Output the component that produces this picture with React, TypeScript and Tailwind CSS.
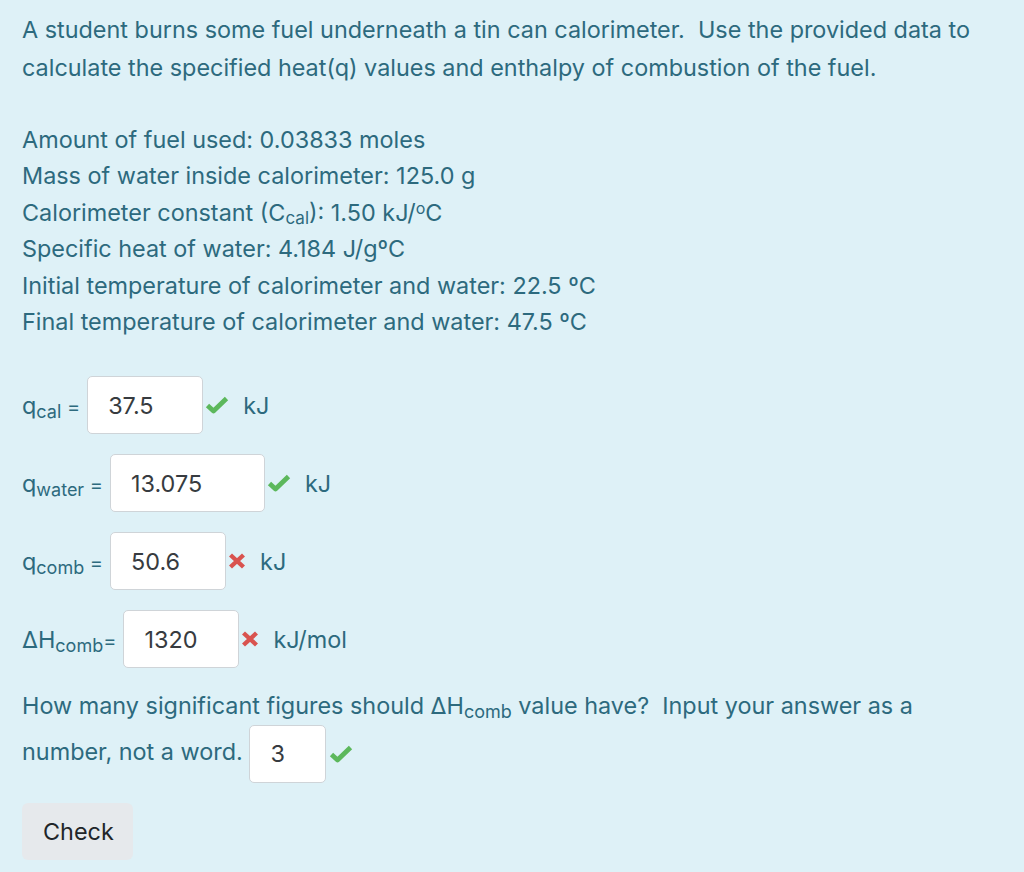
const font = { fontFamily: 'Inter, "Noto Sans", sans-serif' }

function Mark({ ok }: { ok: boolean }) {
  return ok ? (
    <svg viewBox="0 0 24 18" className="w-[24px] h-[18px] shrink-0">
      <path d="M2.5 9.5 L8.5 15 L21.5 2.5" fill="none" stroke="#5cb85c" strokeWidth="4.8" strokeLinejoin="round" />
    </svg>
  ) : (
    <svg viewBox="0 0 18 16" className="w-[18px] h-[16px] shrink-0">
      <path d="M2.5 2 L15.5 14 M15.5 2 L2.5 14" fill="none" stroke="#d9534f" strokeWidth="4.4" />
    </svg>
  )
}

function Answer({ value, width }: { value: string; width: string }) {
  return (
    <span
      className={`inline-flex items-center h-[58px] ${width} pl-[20px] bg-white border border-[#cfd4d8] rounded-[5px] text-[#373b40] align-middle`}
    >
      {value}
    </span>
  )
}

interface Row {
  sym: string
  sub: string
  eq: string
  value: string
  width: string
  ok: boolean
  unit: string
}

const rows: Row[] = [
  { sym: 'q', sub: 'cal', eq: ' =', value: '37.5', width: 'w-[116px]', ok: true, unit: 'kJ' },
  { sym: 'q', sub: 'water', eq: ' =', value: '13.075', width: 'w-[155px]', ok: true, unit: 'kJ' },
  { sym: 'q', sub: 'comb', eq: ' =', value: '50.6', width: 'w-[116px]', ok: false, unit: 'kJ' },
  { sym: 'ΔH', sub: 'comb', eq: '=', value: '1320', width: 'w-[116px]', ok: false, unit: 'kJ/mol' },
]

const data = [
  'Amount of fuel used: 0.03833 moles',
  'Mass of water inside calorimeter: 125.0 g',
  null,
  'Specific heat of water: 4.184 J/g\u00baC',
  'Initial temperature of calorimeter and water: 22.5 \u00baC',
  'Final temperature of calorimeter and water: 47.5 \u00baC',
]

export default function App() {
  return (
    <div
      className="min-h-[872px] bg-[#def1f7] text-[#2d6a7e] text-[23.4px] px-[22px] pt-[11px] pb-[14px]"
      style={font}
    >
      {/* Prompt */}
      <p className="leading-[38px]">
        A student burns some fuel underneath a tin can calorimeter.&nbsp; Use the provided data to
        calculate the specified heat(q) values and enthalpy of combustion of the fuel.
      </p>

      {/* Given data */}
      <div className="mt-[35px] leading-[36.4px]">
        {data.map((line, i) =>
          line === null ? (
            <div key={i}>
              Calorimeter constant (C<sub className="text-[17px] -bottom-[3px]">cal</sub>): 1.50 kJ/<sup className="text-[16px] -top-[7px]">o</sup>C
            </div>
          ) : (
            <div key={i}>{line}</div>
          )
        )}
      </div>

      {/* Answers */}
      <div className="mt-[36px] flex flex-col gap-[20px]">
        {rows.map((r) => (
          <div key={r.sub + r.sym} className="flex items-center h-[58px]">
            <span className="whitespace-pre">
              {r.sym}
              <sub className="text-[18px] -bottom-[4px]">{r.sub}</sub>
              <span className="text-[20px]">{r.eq}</span>
            </span>
            <span className="ml-[7px] mr-[2px]">
              <Answer value={r.value} width={r.width} />
            </span>
            <Mark ok={r.ok} />
            <span className="ml-[14px]">{r.unit}</span>
          </div>
        ))}
      </div>

      {/* Sig figs */}
      <p className="mt-[19px] leading-[38px]">
        How many significant figures should ΔH<sub className="text-[18px] -bottom-[4px]">comb</sub> value have?&nbsp; Input
        your answer as a number, not a word.{' '}
        <span className="inline-flex items-center whitespace-nowrap align-middle gap-[3px]">
          <Answer value="3" width="w-[77px]" />
          <Mark ok />
        </span>
      </p>

      <button className="mt-[20px] h-[57px] w-[111px] rounded-[6px] bg-[#e6e9ec] text-[#212529] text-left pl-[21px]">
        Check
      </button>
    </div>
  )
}
